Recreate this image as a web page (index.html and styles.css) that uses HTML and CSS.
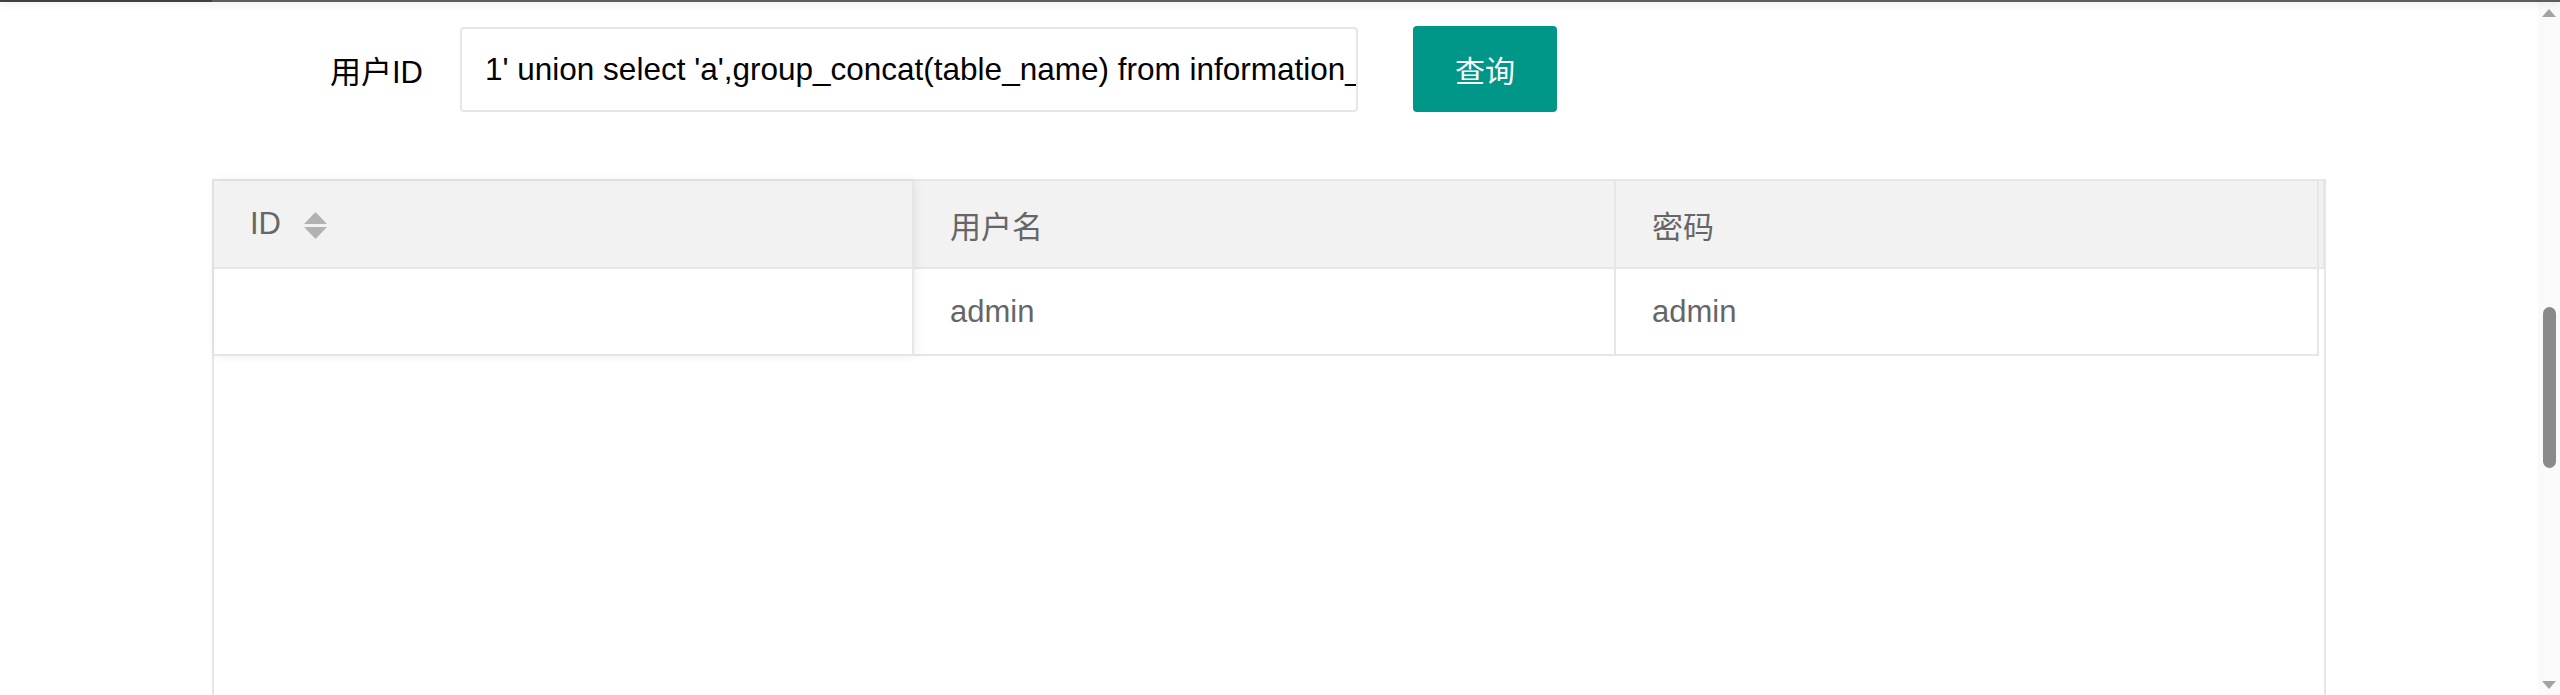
FILE: index.html
```html
<!DOCTYPE html>
<html lang="zh-CN">
<head>
<meta charset="utf-8">
<title>用户查询</title>
<link rel="stylesheet" href="styles.css">
</head>
<body>
<div class="page">
  <div class="topline"></div>
  <div class="frame">
    <div class="main">
      <form class="search">
        <label class="search-label">用户ID</label>
        <input class="search-input" type="text" value="1' union select 'a',group_concat(table_name) from information_schema.tables where table_schema=database()#">
        <button class="search-btn" type="button">查询</button>
      </form>
      <div class="table-box">
        <div class="thead">
          <div class="cell">ID
            <svg class="sort" width="23" height="27" viewBox="0 0 23 27"><path d="M11.5 0 L23 12 H0 Z" fill="#b2b2b2"/><path d="M0 15 H23 L11.5 27 Z" fill="#b2b2b2"/></svg>
          </div>
          <div class="cell">用户名</div>
          <div class="cell">密码</div>
          <div class="gutter"></div>
        </div>
        <div class="trow">
          <div class="cell"></div>
          <div class="cell">admin</div>
          <div class="cell">admin</div>
        </div>
        <div class="fixed-shadow"></div>
      </div>
    </div>
    <div class="scrollbar">
      <div class="arrow-up"></div>
      <div class="track"><div class="thumb"></div></div>
      <div class="arrow-down"></div>
    </div>
  </div>
</div>
</body>
</html>
```
FILE: styles.css
```css
html, body {
  margin: 0;
  padding: 0;
  background: #fff;
}
body {
  font-family: "Liberation Sans", Arial, "Noto Sans CJK SC", sans-serif;
}
.page {
  height: 695px;
  overflow: hidden;
  display: flex;
  flex-direction: column;
}
.topline {
  height: 2px;
  flex: none;
  background: linear-gradient(to right, #3f3f3f 0, #3f3f3f 212px, #5c5c5c 212px);
  box-shadow: 0 1px 8px rgba(0, 0, 0, 0.22);
  position: relative;
  z-index: 2;
}
.frame {
  flex: 1;
  display: flex;
  min-height: 0;
}
.main {
  flex: 1;
  min-width: 0;
  display: flex;
  flex-direction: column;
}
.search {
  margin: 24px 0 0 0;
  padding-left: 212px;
  display: flex;
  align-items: center;
}
.search-label {
  width: 248px;
  box-sizing: border-box;
  padding-right: 37px;
  text-align: right;
  font-size: 31px;
  color: #000;
}
.search-input {
  width: 898px;
  height: 85px;
  box-sizing: border-box;
  border: 2px solid #e6e6e6;
  border-radius: 4px;
  padding: 0 0 0 23px;
  margin: 0;
  font-family: "Liberation Sans", Arial, sans-serif;
  font-size: 31.5px;
  color: #000;
  background: #fff;
  outline: none;
}
.search-btn {
  margin-left: 55px;
  width: 144px;
  height: 86px;
  border: none;
  border-radius: 4px;
  background: #009688;
  color: #fff;
  font-family: "Noto Sans CJK SC", sans-serif;
  font-size: 30px;
  padding: 0;
}
.table-box {
  margin: 67px 212px 0 212px;
  border: 2px solid #e6e6e6;
  border-bottom: none;
  height: 700px;
  position: relative;
  flex: none;
}
.thead {
  display: grid;
  grid-template-columns: 700px 702px 703px 1fr;
  background: #f2f2f2;
  border-bottom: 2px solid #e6e6e6;
  height: 86px;
}
.trow {
  display: grid;
  grid-template-columns: 700px 702px 703px;
  width: 2105px;
  height: 85px;
  border-bottom: 2px solid #e6e6e6;
}
.cell {
  display: flex;
  align-items: center;
  padding-left: 36px;
  border-right: 2px solid #e6e6e6;
  font-size: 31px;
  color: #666;
  font-family: "Liberation Sans", Arial, "Noto Sans CJK SC", sans-serif;
}
.sort {
  margin-left: 23px;
  margin-top: 2px;
}
.gutter {
  border-right: 1px solid #e6e6e6;
  margin-right: 0;
}
.fixed-shadow {
  position: absolute;
  left: 0;
  top: 0;
  width: 700px;
  height: 175px;
  box-shadow: 1px 0 10px rgba(0, 0, 0, 0.07);
  pointer-events: none;
}
.scrollbar {
  width: 22px;
  flex: none;
  background: #fafafa;
  display: flex;
  flex-direction: column;
  align-items: center;
}
.arrow-up {
  margin-top: 7px;
  width: 0;
  height: 0;
  border-left: 7px solid transparent;
  border-right: 7px solid transparent;
  border-bottom: 8px solid #a3a3a3;
}
.track {
  flex: 1;
  width: 100%;
  display: flex;
  flex-direction: column;
  align-items: center;
}
.thumb {
  margin-top: 290px;
  width: 13px;
  height: 161px;
  border-radius: 7px;
  background: #8a8a8a;
}
.arrow-down {
  margin-bottom: 6px;
  width: 0;
  height: 0;
  border-left: 7px solid transparent;
  border-right: 7px solid transparent;
  border-top: 8px solid #a3a3a3;
}
```
